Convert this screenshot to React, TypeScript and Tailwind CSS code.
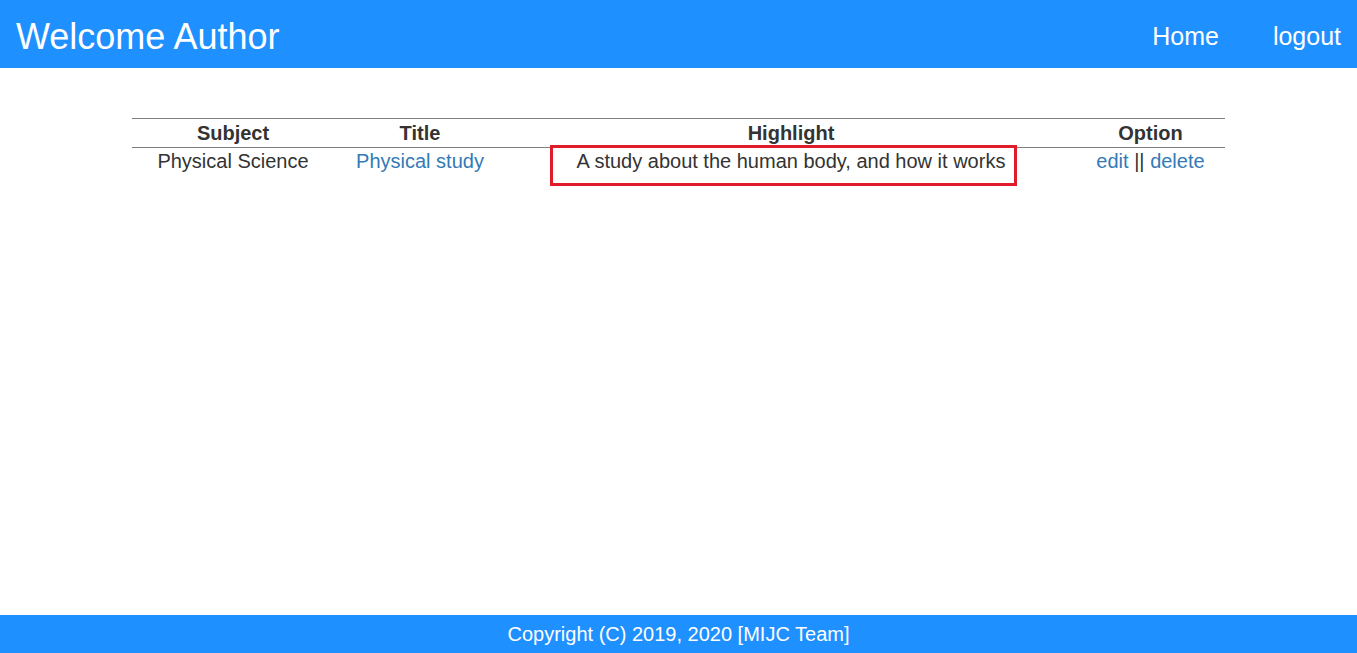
export default function App() {
  return (
    <div
      className="flex min-h-[653px] flex-col bg-white text-[#333]"
      style={{ fontFamily: '"Liberation Sans", Arial, sans-serif' }}
    >
      <header className="flex h-[68px] items-center justify-between bg-[#1e90ff] pt-[5px] pl-4 pr-4 text-white">
        <h1 className="text-[36px] leading-none">Welcome Author</h1>
        <nav className="flex gap-[54px] text-[25px] leading-none">
          <a href="#">Home</a>
          <a href="#">logout</a>
        </nav>
      </header>

      <main className="flex-1 pt-[50px]">
        <table className="ml-[132px] w-[1093px] border-t border-[#808080] text-[20px] leading-[23px]">
          <thead>
            <tr className="border-b border-[#808080]">
              <th className="h-[29px] w-[202px] font-bold">Subject</th>
              <th className="w-[172px] font-bold">Title</th>
              <th className="w-[570px] font-bold">Highlight</th>
              <th className="font-bold">Option</th>
            </tr>
          </thead>
          <tbody>
            <tr>
              <td className="h-[29px] pt-[2px] text-center align-top">Physical Science</td>
              <td className="pt-[2px] text-center align-top">
                <a href="#" className="text-[#337ab7]">
                  Physical study
                </a>
              </td>
              <td className="relative pt-[2px] text-center align-top">
                A study about the human body, and how it works
                <span className="pointer-events-none absolute top-[-3px] left-[44px] h-[41px] w-[467px] border-[3px] border-[#e21b2a]" />
              </td>
              <td className="pt-[2px] text-center align-top">
                <a href="#" className="text-[#337ab7]">
                  edit
                </a>{' '}
                ||{' '}
                <a href="#" className="text-[#337ab7]">
                  delete
                </a>
              </td>
            </tr>
          </tbody>
        </table>
      </main>

      <footer className="flex h-[38px] items-center justify-center bg-[#1e90ff] text-[20px] text-white">
        Copyright (C) 2019, 2020 [MIJC Team]
      </footer>
    </div>
  )
}
